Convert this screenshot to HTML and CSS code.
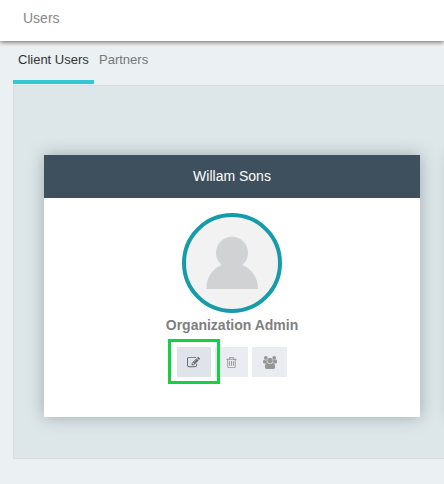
FILE: index.html
```html
<!DOCTYPE html>
<html lang="en">
<head>
<meta charset="utf-8">
<title>Users</title>
<link rel="stylesheet" href="styles.css">
</head>
<body>
<header class="topbar">Users</header>
<nav class="tabs">
  <a class="tab active">Client Users</a>
  <a class="tab">Partners</a>
</nav>
<main class="panel">
  <section class="card">
    <h2 class="card-name">Willam Sons</h2>
    <svg class="avatar" viewBox="0 0 100 100">
      <circle cx="50" cy="50" r="48" fill="#f2f2f2" stroke="#169ca9" stroke-width="4"/>
      <circle cx="50" cy="39.7" r="16" fill="#d0d2d4"/>
      <path d="M24.3 76C24.3 64 31 55 41 51.500H59C69 55 76 64 76 76Z" fill="#d0d2d4"/>
    </svg>
    <p class="role">Organization Admin</p>
    <div class="actions">
      <button class="action selected" aria-label="Edit">
        <svg width="13" height="13" viewBox="0 0 1792 1792"><path d="M888 1184l116-116-152-152-116 116v56h96v96h56zm440-720q-16-16-33 1l-350 350q-17 17-1 33t33-1l350-350q17-17 1-33zm80 594v190q0 119-84.500 203.500t-203.500 84.500h-832q-119 0-203.500-84.500t-84.500-203.500v-832q0-119 84.500-203.500t203.500-84.500h832q63 0 117 25 15 7 18 23 3 17-9 29l-49 49q-14 14-32 8-23-6-45-6h-832q-66 0-113 47t-47 113v832q0 66 47 113t113 47h832q66 0 113-47t47-113v-126q0-13 9-22l64-64q15-15 35-7t20 29zm-96-738l288 288-672 672h-288v-288zm444 132l-92 92-288-288 92-92q28-28 68-28t68 28l152 152q28 28 28 68t-28 68z"/></svg>
      </button>
      <button class="action delete" aria-label="Delete">
        <svg width="13" height="13" viewBox="0 0 1792 1792"><path d="M704 736v576q0 14-9 23t-23 9h-64q-14 0-23-9t-9-23v-576q0-14 9-23t23-9h64q14 0 23 9t9 23zm256 0v576q0 14-9 23t-23 9h-64q-14 0-23-9t-9-23v-576q0-14 9-23t23-9h64q14 0 23 9t9 23zm256 0v576q0 14-9 23t-23 9h-64q-14 0-23-9t-9-23v-576q0-14 9-23t23-9h64q14 0 23 9t9 23zm128 724v-948h-896v948q0 22 7 40.500t14.500 27 10.500 8.500h832q3 0 10.500-8.500t14.500-27 7-40.500zm-672-1076h448l-48-117q-7-9-17-11h-317q-10 2-17 11zm928 32v64q0 14-9 23t-23 9h-96v948q0 83-47 143.500t-113 60.500h-832q-66 0-113-58.500t-47-141.500v-952h-96q-14 0-23-9t-9-23v-64q0-14 9-23t23-9h309l70-167q15-37 54-63t79-26h320q40 0 79 26t54 63l70 167h309q14 0 23 9t9 23z"/></svg>
      </button>
      <button class="action groups" aria-label="Groups">
        <svg width="14" height="13" viewBox="-64 0 1920 1792"><path d="M529 896q-162 5-265 128h-134q-82 0-138-40.500t-56-118.500q0-353 124-353 6 0 43.500 21t97.500 42.500 119 21.500q67 0 133-23-5 37-5 66 0 159 93 297zm1071 637q0 120-73 189.500t-194 69.500h-874q-121 0-194-69.500t-73-189.500q0-53 3.500-103.500t14-109 26.500-108.500 43-97.500 62-81 85.500-53.500 111.500-20q10 0 43 21.500t73 48 107 48 135 21.500 135-21.500 107-48 73-48 43-21.500q61 0 111.500 20t85.500 53.500 62 81 43 97.500 26.500 108.500 14 109 3.500 103.500zm-1024-1277q0 106-75 181t-181 75-181-75-75-181 75-181 181-75 181 75 75 181zm704 384q0 159-112.500 271.500t-271.500 112.500-271.500-112.500-112.500-271.500 112.500-271.500 271.500-112.500 271.500 112.500 112.500 271.500zm576 225q0 78-56 118.500t-138 40.500h-134q-103-123-265-128 93-138 93-297 0-29-5-66 66 23 133 23 59 0 119-21.500t97.500-42.500 43.500-21q124 0 124 353zm-128-609q0 106-75 181t-181 75-181-75-75-181 75-181 181-75 181 75 75 181z"/></svg>
      </button>
    </div>
  </section>
</main>
</body>
</html>
```
FILE: styles.css
```css
*, *::after { box-sizing: border-box; }
body {
  margin: 0;
  height: 484px;
  overflow: hidden;
  background: #ebf0f3;
  font-family: "Liberation Sans", Arial, sans-serif;
}
.topbar {
  position: relative;
  height: 41px;
  padding: 10px 23px 0;
  background: #fff;
  box-shadow: 0 1px 5px rgba(0, 0, 0, .6);
  color: #888;
  font-size: 14px;
  line-height: 17px;
}
.tabs {
  display: flex;
  height: 44px;
  padding-left: 13px;
  background: linear-gradient(#f1f1f1 7px, transparent 7px);
}
.tab {
  height: 43px;
  padding: 10px 5px 0;
  color: #777;
  font-size: 13px;
  line-height: 17px;
}
.tab.active {
  width: 81px;
  color: #333;
  white-space: nowrap;
  border-bottom: 4px solid #36c6d3;
}
.panel {
  display: flex;
  gap: 31px;
  overflow: hidden;
  height: 374px;
  margin-left: 13px;
  padding: 69px 0 0 30px;
  border: 1px solid #d9dbdc;
  border-right: 0;
  background: #dde6e9;
}
/* Leading edge of the next card in the row */
.panel::after {
  content: "";
  flex: 0 0 20px;
  height: 262px;
  box-shadow: 0 0 15px rgba(65, 85, 85, .4);
}
.card {
  flex: 0 0 376px;
  display: flex;
  flex-direction: column;
  align-items: center;
  height: 262px;
  background: #fff;
  box-shadow: 0 0 15px rgba(65, 85, 85, .4);
}
.card-name {
  width: 100%;
  height: 43px;
  margin: 0;
  background: #3e4f5e;
  color: #fff;
  font-size: 14px;
  font-weight: 400;
  line-height: 43px;
  text-align: center;
}
.avatar {
  width: 100px;
  height: 100px;
  margin-top: 15px;
}
.role {
  margin: 4px 0 0;
  color: #7f7f7f;
  font-size: 14px;
  font-weight: 700;
  line-height: 17px;
}
.actions {
  display: flex;
  gap: 4px;
  margin-top: 13px;
}
.action {
  display: flex;
  align-items: center;
  justify-content: center;
  width: 34px;
  height: 30px;
  padding: 0;
  border: 0;
  background: #e9edf2;
  fill: #969696;
}
.action.delete { width: 33px; }
.action.groups { width: 35px; }
.action.selected {
  position: relative;
  padding-right: 1px;
  background: #dfe4eb;
  fill: #666;
}
.action.selected::after {
  content: "";
  position: absolute;
  top: -8px;
  left: -9px;
  width: 52px;
  height: 45px;
  border: 3px solid #12d244;
}
```
